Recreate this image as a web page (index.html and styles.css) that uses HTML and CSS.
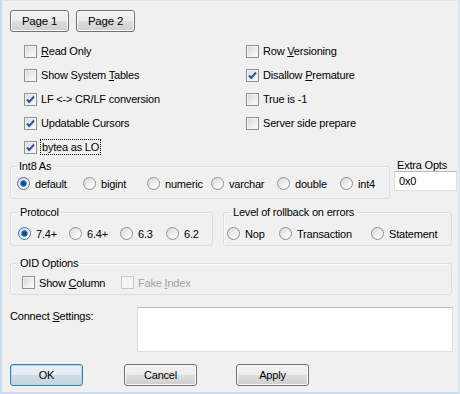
FILE: index.html
```html
<!doctype html>
<html>
<head>
    <title>Advanced Options</title>
    <meta charset="utf-8">
    <link rel="stylesheet" href="styles.css">
</head>
<body>
    <div class="dlg">
        <div class="tabs">
            <button class="btn page">Page 1</button>
            <button class="btn page">Page 2</button>
        </div>

        <div class="opts">
            <div class="col left">
                <div class="chk"><span class="box"></span><span><u>R</u>ead Only</span></div>
                <div class="chk"><span class="box"></span><span>Show System <u>T</u>ables</span></div>
                <div class="chk"><span class="box on"><svg viewBox="0 0 11 11"><path d="M2 5.5 L4.3 8 L9 2.5"/></svg></span><span>LF &lt;-&gt; CR/LF conversion</span></div>
                <div class="chk"><span class="box on"><svg viewBox="0 0 11 11"><path d="M2 5.5 L4.3 8 L9 2.5"/></svg></span><span>Updatable Cursors</span></div>
                <div class="chk"><span class="box on"><svg viewBox="0 0 11 11"><path d="M2 5.5 L4.3 8 L9 2.5"/></svg></span><span class="focus">bytea as LO</span></div>
            </div>
            <div class="col right">
                <div class="chk"><span class="box"></span><span>Row <u>V</u>ersioning</span></div>
                <div class="chk"><span class="box on"><svg viewBox="0 0 11 11"><path d="M2 5.5 L4.3 8 L9 2.5"/></svg></span><span>Disallow <u>P</u>remature</span></div>
                <div class="chk"><span class="box"></span><span>True is -1</span></div>
                <div class="chk"><span class="box"></span><span>Server side prepare</span></div>
            </div>
        </div>

        <div class="row int8-row">
            <fieldset class="grp int8">
                <legend>Int8 As</legend>
                <div class="radios">
                    <div class="opt w66"><span class="radio on"></span><span>default</span></div>
                    <div class="opt w64"><span class="radio"></span><span>bigint</span></div>
                    <div class="opt w64"><span class="radio"></span><span>numeric</span></div>
                    <div class="opt w66"><span class="radio"></span><span>varchar</span></div>
                    <div class="opt w63"><span class="radio"></span><span>double</span></div>
                    <div class="opt"><span class="radio"></span><span>int4</span></div>
                </div>
            </fieldset>
            <div class="extra">
                <span class="extra-label">Extra Opts</span>
                <div class="edit">0x0</div>
            </div>
        </div>

        <div class="row proto-row">
            <fieldset class="grp proto">
                <legend>Protocol</legend>
                <div class="radios">
                    <div class="opt w51"><span class="radio on"></span><span>7.4+</span></div>
                    <div class="opt w51"><span class="radio"></span><span>6.4+</span></div>
                    <div class="opt w46"><span class="radio"></span><span>6.3</span></div>
                    <div class="opt"><span class="radio"></span><span>6.2</span></div>
                </div>
            </fieldset>
            <fieldset class="grp rollback">
                <legend>Level of rollback on errors</legend>
                <div class="radios">
                    <div class="opt w52"><span class="radio"></span><span>Nop</span></div>
                    <div class="opt w92"><span class="radio"></span><span>Transaction</span></div>
                    <div class="opt"><span class="radio"></span><span>Statement</span></div>
                </div>
            </fieldset>
        </div>

        <fieldset class="grp oid">
            <legend>OID Options</legend>
            <div class="radios">
                <div class="chk w99"><span class="box"></span><span>Show <u>C</u>olumn</span></div>
                <div class="chk disabled"><span class="box"></span><span>Fake <u>I</u>ndex</span></div>
            </div>
        </fieldset>

        <div class="connect">
            <span class="connect-label">Connect <u>S</u>ettings:</span>
            <div class="memo"></div>
        </div>

        <div class="buttons">
            <button class="btn act default">OK</button>
            <button class="btn act cancel">Cancel</button>
            <button class="btn act">Apply</button>
        </div>
    </div>
</body>
</html>
```

FILE: styles.css
```css
body {
    margin: 0;
    font-family: "Liberation Sans", Arial, sans-serif;
    font-size: 11px;
    letter-spacing: -0.2px;
    color: #000;
}

.dlg {
    box-sizing: border-box;
    width: 460px;
    height: 394px;
    background: #f0f0f0;
    border-left: 2px solid #c9dbef;
    border-top: 1px solid #d9e6f4;
    border-right: 2px solid #dde8f5;
    border-bottom: 2px solid #c9dbef;
    padding: 9px 0 0 8px;
    display: flex;
    flex-direction: column;
}

/* buttons */
.btn {
    box-sizing: border-box;
    height: 22px;
    padding: 0;
    font: inherit;
    letter-spacing: inherit;
    color: #000;
    border: 1px solid #707070;
    border-radius: 3px;
    background: linear-gradient(#f2f2f2 0%, #ebebeb 50%, #dddddd 51%, #cfcfcf 100%);
    box-shadow: inset 0 0 0 1px #fcfcfc;
}

.tabs {
    display: flex;
    gap: 7px;
}

.page {
    width: 59px;
    font-size: 11.5px;
}

/* check boxes */
.opts {
    display: flex;
    margin-top: 7px;
    padding-left: 14px;
}

.col.left {
    width: 222px;
}

.chk {
    display: flex;
    align-items: center;
    height: 24px;
}

.box {
    box-sizing: border-box;
    width: 13px;
    height: 13px;
    margin-right: 4px;
    border: 1px solid #8e8f8f;
    background: linear-gradient(135deg, #d6d6d6, #f7f7f7 80%);
    box-shadow: inset 0 0 0 1px #f4f4f4;
    flex: none;
}

.box svg {
    display: block;
    width: 11px;
    height: 11px;
}

.box svg path {
    fill: none;
    stroke: #2d55a0;
    stroke-width: 2;
}

.focus {
    outline: 1px dotted #000;
    outline-offset: 0;
    padding: 0 1px;
    line-height: 14px;
}

.chk.disabled {
    color: #a0a0a0;
}

.chk.disabled .box {
    border-color: #c8c8c8;
    background: #f4f4f4;
    box-shadow: none;
}

/* group boxes */
.row {
    display: flex;
}

.grp {
    box-sizing: border-box;
    margin: 0;
    min-width: 0;
    border: 1px solid #d5dfe5;
    border-radius: 3px;
    box-shadow: inset 1px 1px 0 #fafafa;
}

.grp legend {
    padding: 0 2px;
    line-height: 13px;
}

.radios {
    display: flex;
    align-items: center;
    height: 13px;
}

.opt {
    display: flex;
    align-items: center;
}

.radio {
    box-sizing: border-box;
    width: 13px;
    height: 13px;
    margin-right: 5px;
    border-radius: 50%;
    border: 1px solid #8e8f8f;
    background: linear-gradient(135deg, #d8d8d8, #fbfbfb 80%);
    flex: none;
}

.radio.on {
    border-color: #4d6e96;
    background:
        radial-gradient(circle, #0f4d8c 0 2px, #4f8fd0 3px, transparent 3.8px),
        linear-gradient(135deg, #d8d8d8, #fbfbfb 80%);
}

.w46 { width: 46px; }
.w51 { width: 51px; }
.w52 { width: 52px; }
.w63 { width: 63px; }
.w64 { width: 64px; }
.w66 { width: 66px; }
.w92 { width: 92px; }
.w99 { width: 99px; }

.int8-row {
    margin-top: 1px;
}

.int8 {
    width: 380px;
    padding: 4px 6px 8px;
}

.int8 legend {
    margin-left: 0;
}

.extra {
    display: flex;
    flex-direction: column;
    margin-left: 4px;
}

.extra-label {
    margin-left: 3px;
    line-height: 11px;
}

.edit,
.memo {
    box-sizing: border-box;
    background: #fff;
    border: 1px solid #dadee4;
    border-top-color: #b5b9c0;
}

.edit {
    width: 63px;
    height: 20px;
    padding: 3px 0 0 4px;
}

.proto-row {
    margin-top: 7px;
    gap: 10px;
}

.proto {
    width: 203px;
    padding: 8px 7px 5px;
}

.proto legend {
    margin-left: 0;
}

.rollback {
    width: 229px;
    padding: 8px 3px 5px;
}

.rollback legend {
    margin-left: 4px;
}

.oid {
    width: 442px;
    margin-top: 11px;
    padding: 6px 11px 5px;
}

.oid legend {
    margin-left: -4px;
}

.oid .chk {
    height: 13px;
}

/* connect settings */
.connect {
    display: flex;
    margin-top: 12px;
}

.connect-label {
    width: 127px;
    padding-top: 3px;
}

.memo {
    width: 316px;
    height: 45px;
}

.buttons {
    display: flex;
    margin-top: 12px;
}

.act {
    width: 73px;
}

.act.default {
    border-color: #3c7fb1;
    box-shadow: inset 0 0 0 1px #a6d9f4;
    background: linear-gradient(#eaf2f6 0%, #e1ebf0 50%, #cfdde6 51%, #c3d2db 100%);
    margin-right: 41px;
}

.act.cancel {
    margin-right: 39px;
}
```
